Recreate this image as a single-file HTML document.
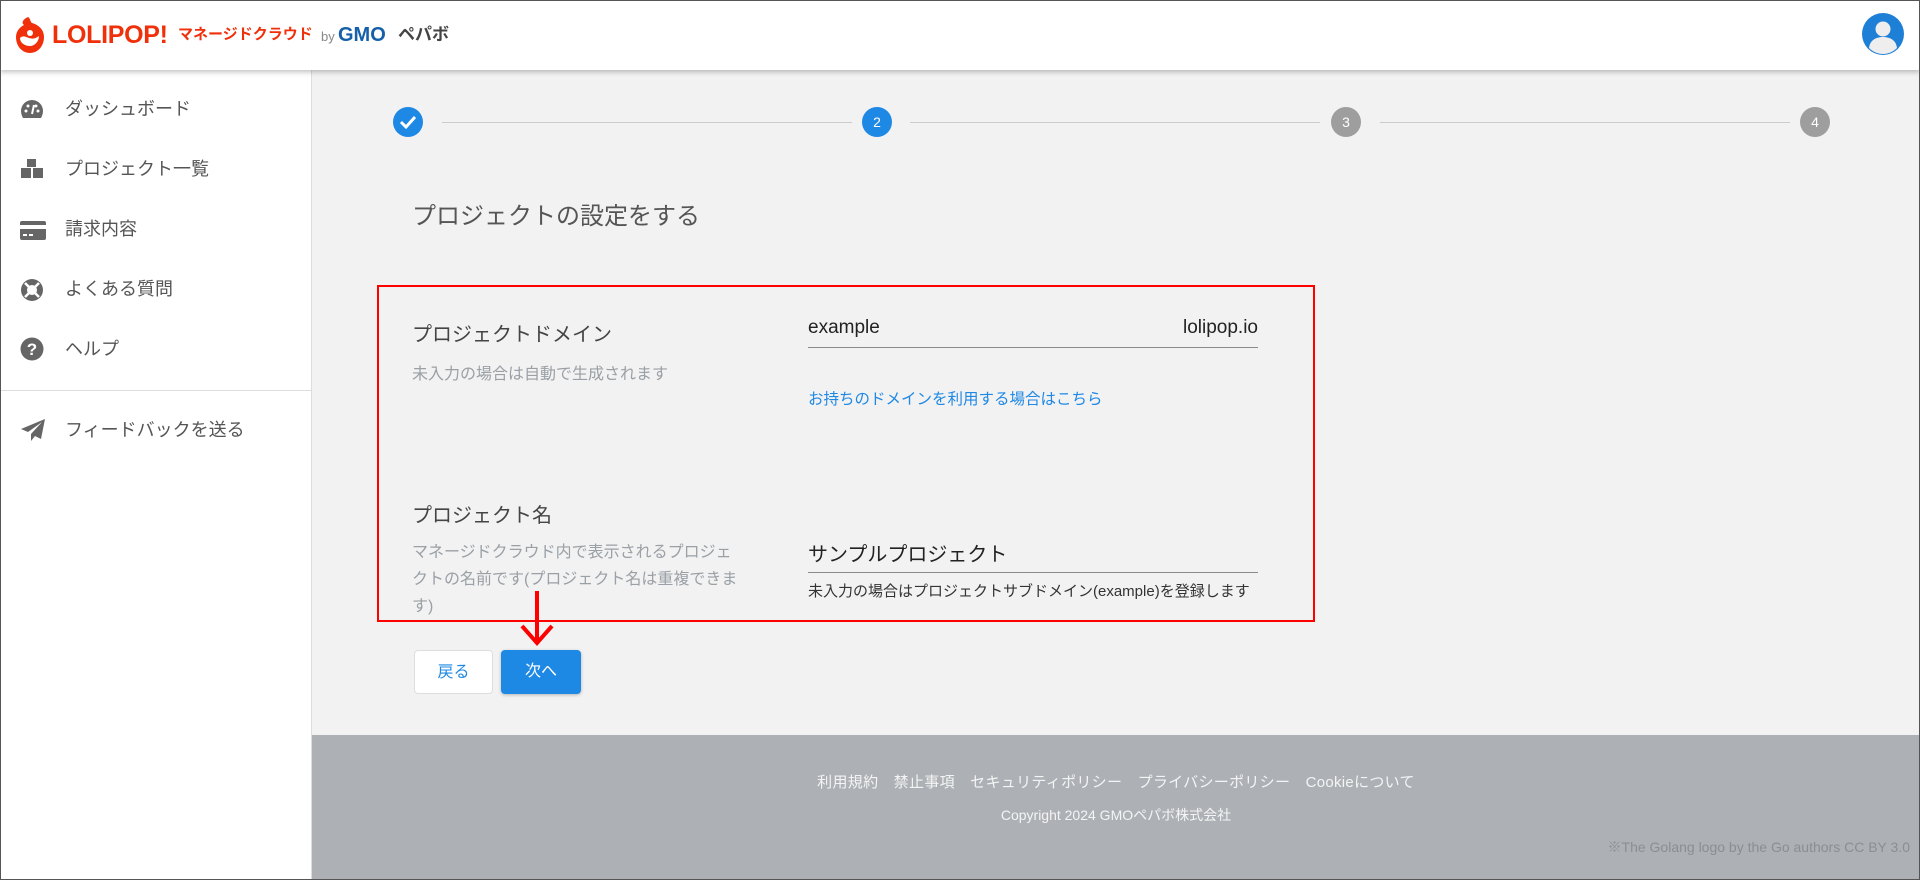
<!DOCTYPE html>
<html><head><meta charset="utf-8"><style>
*{margin:0;padding:0;box-sizing:border-box}
body{width:1920px;height:880px;overflow:hidden;background:#f2f2f2;font-family:"Liberation Sans","Noto Sans CJK JP",sans-serif;position:relative}
.abs{position:absolute;white-space:nowrap}
#hdr{position:absolute;left:0;top:0;width:1920px;height:70px;background:#fff;box-shadow:0 2px 5px rgba(0,0,0,.25);z-index:3}
#side{position:absolute;left:0;top:70px;width:312px;height:810px;background:#fff;border-right:1px solid #ddd;z-index:2}
.nav{position:absolute;left:65px;font-size:18px;color:#555;line-height:24px}
.ic{position:absolute;left:20px}
#foot{position:absolute;left:312px;top:735px;width:1608px;height:145px;background:#adb1b5}
.circ{position:absolute;width:30px;height:30px;border-radius:50%;color:#fff;font-size:14px;text-align:center;line-height:30px;top:107px}
.line{position:absolute;top:122px;height:1px;background:#ccc}
.lbl{font-size:20px;color:#444}
.hint{font-size:16px;color:#9aa0a6}
.btn{position:absolute;top:650px;height:44px;border-radius:4px;font-size:16px;text-align:center;line-height:44px}
#frame{position:absolute;left:0;top:0;width:1920px;height:880px;border:1px solid #555;z-index:10;pointer-events:none}
</style></head><body>
<div id="hdr">
 <svg class="abs" style="left:14px;top:16px" width="32" height="38" viewBox="0 0 32 38"><path d="M14 1c3 2 2 5 4 6 7 2 12 7 12 14 0 9-6 16-14 16S2 30 2 21c0-6 4-10 8-12-3-2-1-6 4-8z" fill="#f0300a"/><path d="M6 22c3-3 6-1 9 0s6 1 10-2c0 5-4 10-9 10S6 27 6 22z" fill="#fff"/><circle cx="16" cy="17" r="3" fill="#fff"/></svg>
 <div class="abs" style="left:52px;top:20px;font-size:25px;font-weight:bold;color:#f0300a;letter-spacing:-0.3px;line-height:30px">LOLIPOP!</div>
 <div class="abs" style="left:178px;top:25px;font-size:15px;font-weight:bold;color:#f0300a;line-height:20px;letter-spacing:0px">マネージドクラウド</div>
 <div class="abs" style="left:321px;top:28px;font-size:13px;color:#888;line-height:18px">by</div>
 <div class="abs" style="left:338px;top:24px;font-size:20px;font-weight:bold;color:#1560a8;line-height:22px;letter-spacing:0px">GMO</div>
 <div class="abs" style="left:398px;top:25px;font-size:17px;font-weight:bold;color:#444;line-height:20px">ペパボ</div>
 <svg class="abs" style="left:1862px;top:13px" width="42" height="42" viewBox="0 0 42 42"><circle cx="21" cy="21" r="21" fill="#1e7fd6"/><circle cx="21" cy="16" r="7.5" fill="#eee"/><path d="M7 35c1-8 7-11 14-11s13 3 14 11c-4 4-9 6-14 6S11 39 7 35z" fill="#eee"/></svg>
</div>
<div id="side">
 <svg class="ic" style="top:28px" width="24" height="22" viewBox="0 0 24 22"><path d="M12 2A11 11 0 0 0 1 13c0 3 1 5 2 7h18c1-2 2-4 2-7A11 11 0 0 0 12 2z" fill="#666"/><circle cx="6" cy="13" r="1.5" fill="#fff"/><circle cx="8" cy="8" r="1.5" fill="#fff"/><circle cx="18" cy="13" r="1.5" fill="#fff"/><circle cx="16" cy="8" r="1.5" fill="#fff"/><path d="M12 16l2-9" stroke="#fff" stroke-width="2"/></svg>
 <div class="nav" style="top:27px">ダッシュボード</div>
 <svg class="ic" style="top:88px" width="24" height="22" viewBox="0 0 24 22"><path d="M7 1h9v8H7zM1 10h10v10H1zM13 10h10v10H13z" fill="#666"/></svg>
 <div class="nav" style="top:87px">プロジェクト一覧</div>
 <svg class="ic" style="top:151px" width="26" height="20" viewBox="0 0 26 20"><rect x="0" y="0" width="26" height="19" rx="2" fill="#666"/><rect x="0" y="4" width="26" height="4" fill="#fff"/><rect x="3" y="13" width="4" height="2" fill="#fff"/><rect x="9" y="13" width="4" height="2" fill="#fff"/></svg>
 <div class="nav" style="top:147px">請求内容</div>
 <svg class="ic" style="top:208px" width="24" height="24" viewBox="0 0 24 24"><circle cx="12" cy="12" r="11" fill="#666"/><circle cx="12" cy="12" r="5" fill="#fff"/><path d="M5 5l4 4M19 5l-4 4M5 19l4-4M19 19l-4-4" stroke="#fff" stroke-width="2.5"/></svg>
 <div class="nav" style="top:207px">よくある質問</div>
 <svg class="ic" style="top:267px" width="24" height="24" viewBox="0 0 24 24"><circle cx="12" cy="12" r="11.5" fill="#666"/><text x="12" y="18" text-anchor="middle" font-size="17" font-weight="bold" fill="#fff" font-family="Liberation Sans">?</text></svg>
 <div class="nav" style="top:267px">ヘルプ</div>
 <div style="position:absolute;left:0;top:320px;width:312px;height:1px;background:#ddd"></div>
 <svg class="ic" style="top:348px" width="26" height="24" viewBox="0 0 26 24"><path d="M25 1L1 11l7 3 14-10-11 12v7l4-5 6 3z" fill="#666"/></svg>
 <div class="nav" style="top:348px">フィードバックを送る</div>
</div>
<div class="line" style="left:442px;width:410px"></div>
<div class="line" style="left:910px;width:410px"></div>
<div class="line" style="left:1380px;width:410px"></div>
<div class="circ" style="left:393px;background:#1e88e5"><svg width="30" height="30" viewBox="0 0 30 30"><path d="M8 15l5 5 9-10" stroke="#fff" stroke-width="3" fill="none"/></svg></div>
<div class="circ" style="left:862px;background:#1e88e5">2</div>
<div class="circ" style="left:1331px;background:#9e9e9e">3</div>
<div class="circ" style="left:1800px;background:#9e9e9e">4</div>
<div class="abs" style="left:412px;top:202px;font-size:24px;color:#555;line-height:30px">プロジェクトの設定をする</div>
<div style="position:absolute;left:377px;top:285px;width:938px;height:337px;border:2px solid #f00"></div>
<div class="abs lbl" style="left:412px;top:318px">プロジェクトドメイン</div>
<div class="abs hint" style="left:412px;top:360px">未入力の場合は自動で生成されます</div>
<div class="abs" style="left:808px;top:317px;font-size:19px;color:#222">example</div>
<div class="abs" style="left:1100px;width:158px;text-align:right;top:317px;font-size:19px;color:#222">lolipop.io</div>
<div style="position:absolute;left:808px;top:347px;width:450px;height:1px;background:#8a8a8a"></div>
<div class="abs" style="left:808px;top:387px;font-size:15.5px;color:#1e88e5">お持ちのドメインを利用する場合はこちら</div>
<div class="abs lbl" style="left:412px;top:499px">プロジェクト名</div>
<div style="position:absolute;left:412px;top:539px;width:330px;font-size:16px;color:#9aa0a6;line-height:27px">マネージドクラウド内で表示されるプロジェクトの名前です(プロジェクト名は重複できます)</div>
<div class="abs" style="left:808px;top:538px;font-size:20px;color:#222">サンプルプロジェクト</div>
<div style="position:absolute;left:808px;top:572px;width:450px;height:1px;background:#8a8a8a"></div>
<div class="abs" style="left:808px;top:580px;font-size:15px;color:#333">未入力の場合はプロジェクトサブドメイン(example)を登録します</div>
<svg class="abs" style="left:515px;top:590px" width="44" height="60" viewBox="0 0 44 60"><path d="M22 1v52M7 36l15 17 15-17" stroke="#f00" stroke-width="4" fill="none"/></svg>
<div class="btn" style="left:414px;width:79px;background:#fff;border:1px solid #ddd;color:#1e88e5">戻る</div>
<div class="btn" style="left:501px;width:80px;background:#1e88e5;color:#fff;box-shadow:0 1px 3px rgba(0,0,0,.25)">次へ</div>
<div id="foot">
 <div class="abs" style="left:0;width:1608px;text-align:center;top:36px;font-size:15px;color:#f4f4f4;word-spacing:12px;letter-spacing:0.3px">利用規約　禁止事項　セキュリティポリシー　プライバシーポリシー　Cookieについて</div>
 <div class="abs" style="left:0;width:1608px;text-align:center;top:70px;font-size:14px;color:#f4f4f4">Copyright 2024 GMOペパボ株式会社</div>
 <div class="abs" style="right:10px;top:102px;font-size:14px;color:#8a8e93">※The Golang logo by the Go authors CC BY 3.0</div>
</div>
<div id="frame"></div>
</body></html>
